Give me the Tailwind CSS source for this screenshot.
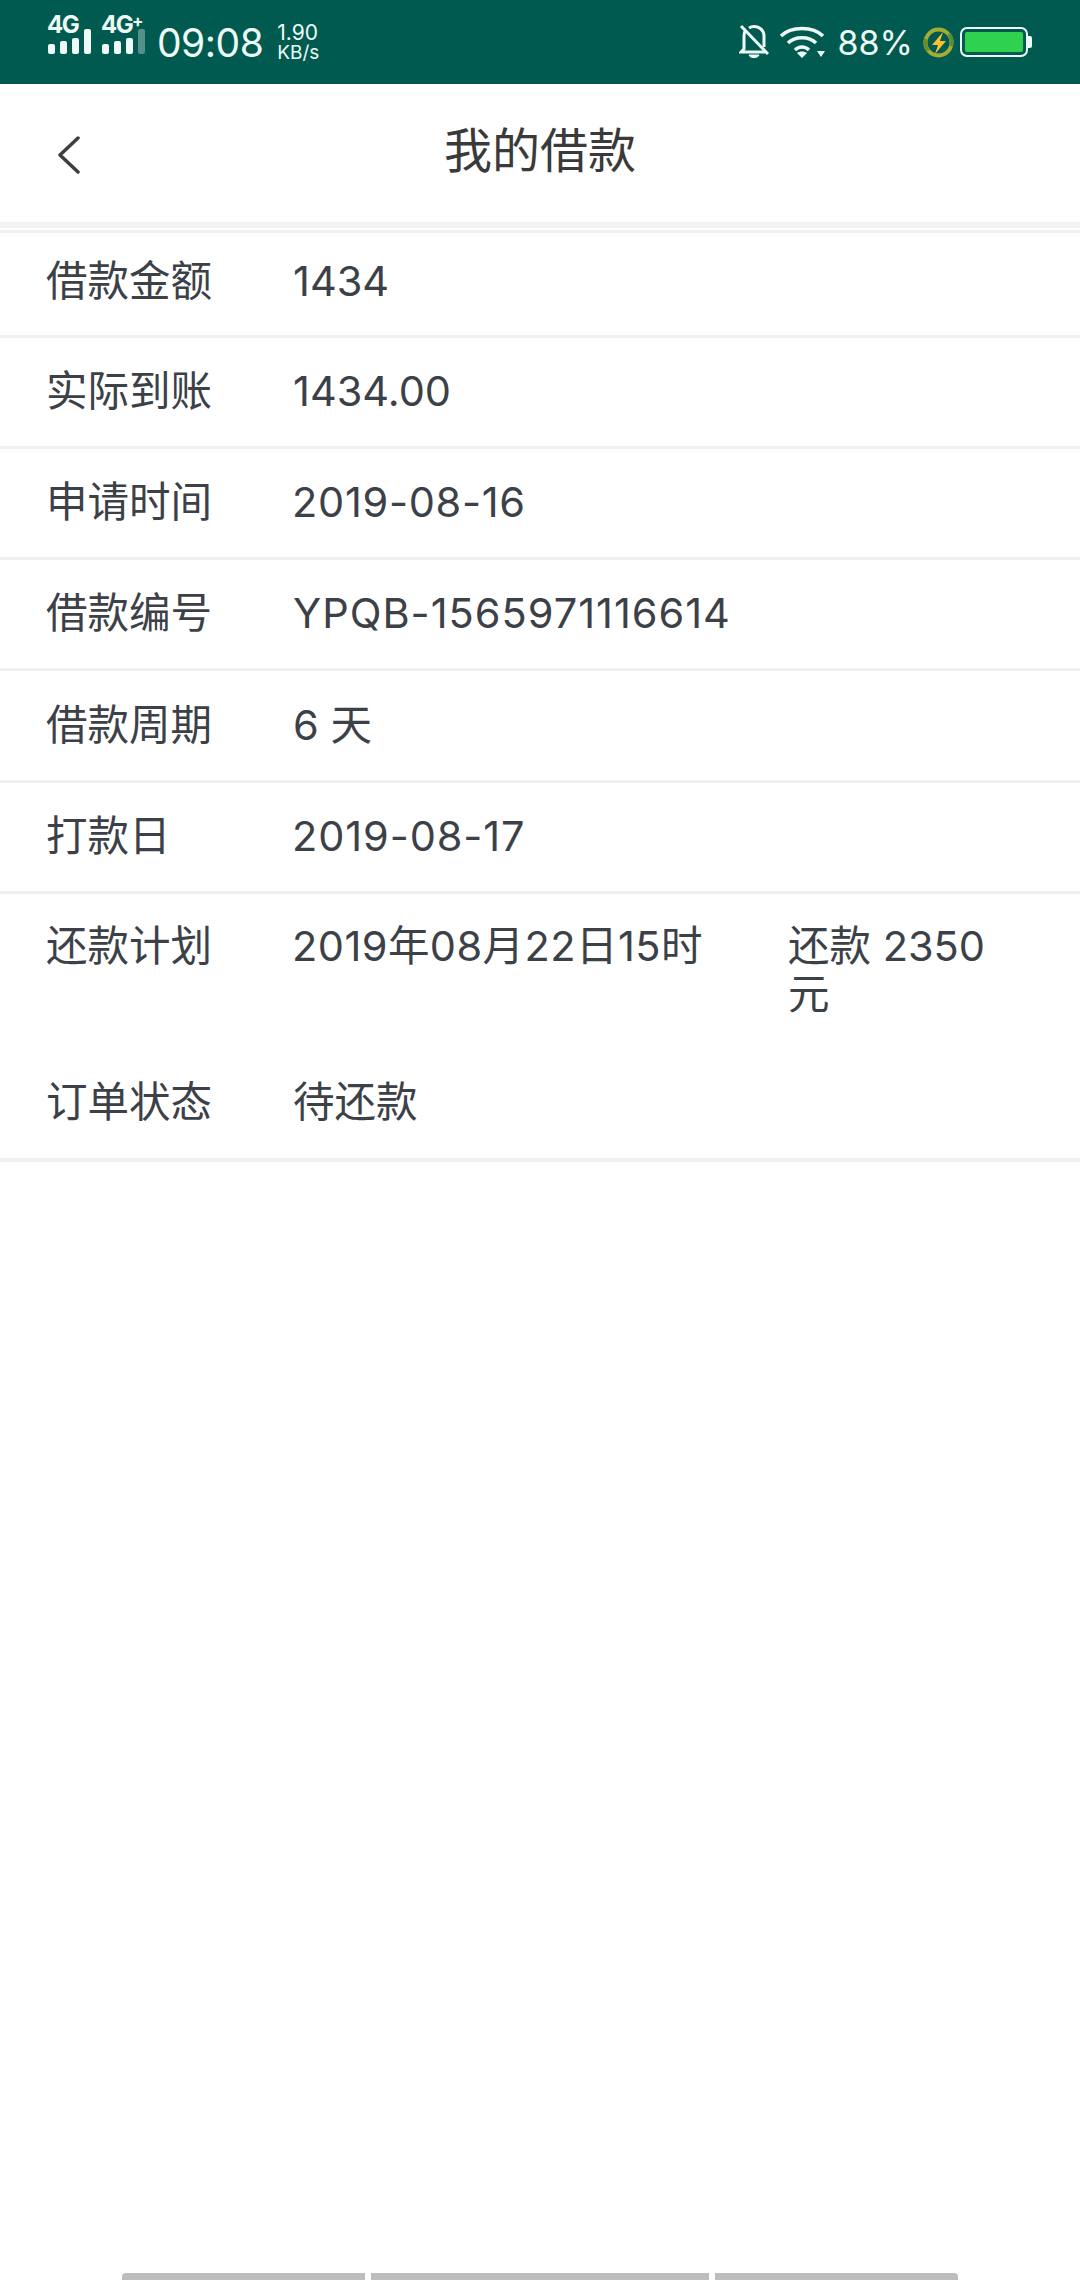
<!DOCTYPE html>
<html lang="zh-CN">
<head>
    <meta charset="UTF-8">
    <meta name="viewport" content="width=device-width, initial-scale=1.0">
    <title>我的借款</title>
    <script src="https://cdn.jsdelivr.net/npm/@tailwindcss/browser@4"></script>
</head>
<body class="bg-white font-['Inter','Noto_Sans_CJK_SC',sans-serif] text-[#3c4148] w-[1080px] h-[2280px] overflow-hidden relative">
    <!-- status bar -->
    <div class="h-[84px] bg-[#005a50] text-[#eefaf6] flex items-center justify-between pl-[47px] pr-[48px]">
        <div class="flex items-center">
            <div class="w-[44px] h-[36px] relative mt-[5px]">
                <span class="absolute left-0 top-[-15px] text-[24px] leading-[26px] font-bold tracking-[-1.5px]">4G</span>
                <svg class="absolute left-0 top-[2px]" width="44" height="26" viewBox="0 0 44 26" fill="currentColor">
                    <rect x="1" y="15" width="7" height="10" rx="2"/><rect x="13" y="12" width="7" height="13" rx="2"/><rect x="25" y="9" width="7" height="16" rx="2"/><rect x="37" y="0" width="7" height="25" rx="2"/>
                </svg>
            </div>
            <div class="w-[44px] h-[36px] relative mt-[5px] ml-[10px]">
                <span class="absolute left-0 top-[-15px] text-[24px] leading-[26px] font-bold tracking-[-1.5px]">4G</span>
                <span class="absolute left-[31px] top-[-18px] text-[17px] leading-[24px] font-bold">+</span>
                <svg class="absolute left-0 top-[2px]" width="44" height="26" viewBox="0 0 44 26" fill="currentColor">
                    <rect x="1" y="15" width="7" height="10" rx="2"/><rect x="13" y="12" width="7" height="13" rx="2"/><rect x="25" y="9" width="7" height="16" rx="2"/><rect x="37" y="0" width="7" height="25" rx="2" opacity=".35"/>
                </svg>
            </div>
            <span class="ml-[12px] text-[39px] leading-[44px] tracking-[-0.5px] mt-[1px]">09:08</span>
            <div class="ml-[14px] flex flex-col items-start text-[19px] leading-[20px] mt-[1px]">
                <span class="text-[21px]">1.90</span>
                <span>KB/s</span>
            </div>
        </div>
        <div class="flex items-center">
            <svg width="30" height="36" viewBox="0 0 30 36" fill="none" stroke="currentColor" stroke-width="3">
                <path d="M6 7c-.6 1.500-1 3-1 5v13l-3 3h24M10 4c1.500-1 3-1.500 5-1.500 5.500 0 10 4 10 9.500v11"/>
                <path d="M10 31c1 3.500 9 3.500 10 0h-10z" fill="currentColor" stroke-width="1"/>
                <path d="M2 2l27 28"/>
            </svg>
            <svg class="ml-[11px]" width="45" height="32" viewBox="0 0 45 32" fill="currentColor">
                <path d="M1 10C11 0 33 0 43 10" fill="none" stroke="currentColor" stroke-width="3.500"/>
                <path d="M8 17c7-7 21-7 28 0" fill="none" stroke="currentColor" stroke-width="3.500"/>
                <path d="M15 24c4-4 10-4 14 0" fill="none" stroke="currentColor" stroke-width="3.500"/>
                <path d="M17 27c3-2 7-2 10 0l-5 5z"/>
                <path d="M37 25h8l-4 6z"/>
            </svg>
            <span class="ml-[13px] text-[34px] leading-[40px] mt-[2px]">88%</span>
            <svg class="ml-[10px]" width="31" height="31" viewBox="0 0 31 31" fill="none">
                <circle cx="15.500" cy="15.500" r="13" stroke="#a3ad33" stroke-width="4"/>
                <path d="M5 24A13 13 0 0 1 3 12" stroke="#6f8a2e" stroke-width="4"/>
                <path d="M26 7A13 13 0 0 1 28 19" stroke="#5f8a38" stroke-width="4"/>
                <path d="M20 5L9 18h6l-3 9 11-13h-6z" fill="#fbc02d"/>
            </svg>
            <div class="ml-[6px] w-[68px] h-[30px] rounded-[7px] border-[2px] border-[#eefaf6] p-[3px]">
                <div class="w-full h-full bg-[#2fd24f] rounded-[2px]"></div>
            </div>
            <div class="w-[4px] h-[12px] bg-[#eefaf6] rounded-r-[2px]"></div>
        </div>
    </div>

    <!-- title bar -->
    <div class="h-[138px] flex items-center relative">
        <svg class="absolute left-[56px] top-[51px]" width="24" height="40" viewBox="0 0 24 40" fill="none" stroke="#3f3f3f" stroke-width="3.500" stroke-linecap="round" stroke-linejoin="round">
            <path d="M22 3L4 20l18 17"/>
        </svg>
        <h1 class="w-full text-center text-[48px] leading-[56px] mt-[-4px] text-[#3a3a3a]">我的借款</h1>
    </div>
    <div class="h-[6px] bg-[#f2f2f2]"></div>
    <div class="h-[2px]"></div>

    <!-- details -->
    <div class="text-[41.5px] leading-[48px]">
        <div class="border-t-[3px] border-[#f0f0f0] h-[105px] flex items-center pl-[46px] pb-[7px]"><span class="w-[247px]">借款金额</span><span>1434</span></div>
        <div class="border-t-[3px] border-[#f0f0f0] h-[111px] flex items-center pl-[46px] pb-[2px]"><span class="w-[247px]">实际到账</span><span>1434.00</span></div>
        <div class="border-t-[3px] border-[#f0f0f0] h-[111px] flex items-center pl-[46px] pb-[2px]"><span class="w-[246px]">申请时间</span><span class="tracking-[0.7px]">2019-08-16</span></div>
        <div class="border-t-[3px] border-[#f0f0f0] h-[111px] flex items-center pl-[46px] pb-[2px]"><span class="w-[247px]">借款编号</span><span class="tracking-[1px]">YPQB-1565971116614</span></div>
        <div class="border-t-[3px] border-[#f0f0f0] h-[112px] flex items-center pl-[46px] pb-[2px]"><span class="w-[247px]">借款周期</span><span>6 天</span></div>
        <div class="border-t-[3px] border-[#f0f0f0] h-[111px] flex items-center pl-[46px] pb-[2px]"><span class="w-[246px]">打款日</span><span class="tracking-[0.9px]">2019-08-17</span></div>
        <div class="border-t-[3px] border-[#f0f0f0] h-[271px] pl-[46px] pt-[28px] border-b-[4px]">
            <div class="flex">
                <span class="w-[246px]">还款计划</span>
                <span class="w-[496px] tracking-[0.45px]">2019年08月22日15时</span>
                <span class="w-[220px]">还款 2350 元</span>
            </div>
            <div class="flex mt-[60px]">
                <span class="w-[247px]">订单状态</span>
                <span>待还款</span>
            </div>
        </div>
    </div>

    <!-- scroll indicators at the bottom edge -->
    <div class="absolute left-[122px] bottom-0 flex gap-[6px]">
        <div class="w-[243px] h-[7px] bg-[#bdbdbd] rounded-tl-[4px]"></div>
        <div class="w-[338px] h-[7px] bg-[#bdbdbd]"></div>
        <div class="w-[243px] h-[7px] bg-[#bdbdbd] rounded-tr-[4px]"></div>
    </div>
</body>
</html>
